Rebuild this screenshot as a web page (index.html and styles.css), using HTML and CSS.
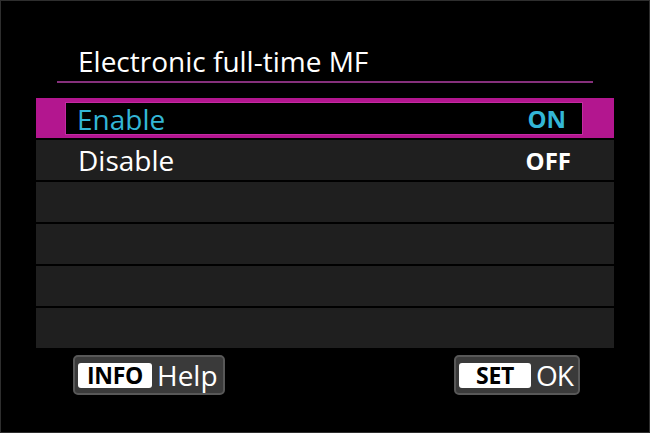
FILE: index.html
```html
<!DOCTYPE html>
<html lang="en">
<head>
<meta charset="utf-8">
<title>Electronic full-time MF</title>
<link rel="stylesheet" href="styles.css">
</head>
<body>
<div class="screen">
  <div class="header"><h1 class="title">Electronic full-time MF</h1></div>
  <div class="list">
    <div class="row selected">
      <div class="sel"><span class="label">Enable</span><span class="value">ON</span></div>
    </div>
    <div class="row"><span class="label">Disable</span><span class="value">OFF</span></div>
    <div class="row"></div>
    <div class="row"></div>
    <div class="row"></div>
    <div class="row"></div>
  </div>
  <div class="footer">
    <div class="btn info"><span class="key">INFO</span><span class="act">Help</span></div>
    <div class="btn set"><span class="key">SET</span><span class="act">OK</span></div>
  </div>
</div>
</body>
</html>
```
FILE: styles.css
```css
html, body {
  margin: 0;
  padding: 0;
  background: #000;
}
body {
  width: 650px;
  height: 433px;
  overflow: hidden;
  font-family: "Open Sans", "DejaVu Sans", sans-serif;
  color: #fff;
}
.screen {
  box-sizing: border-box;
  width: 650px;
  height: 433px;
  border: 1px solid #2e2e2e;
  padding-top: 41px;
}
.header {
  margin-left: 56px;
  width: 536px;
  border-bottom: 2px solid #86307c;
  padding-left: 21px;
  box-sizing: border-box;
  height: 41px;
}
.title {
  margin: 0;
  font-weight: 400;
  font-size: 28px;
  line-height: 38px;
}
.list {
  margin-top: 15px;
  margin-left: 35px;
  width: 578px;
  display: flex;
  flex-direction: column;
  gap: 2px;
}
.row {
  height: 40px;
  box-sizing: border-box;
  background: #1f1f1f;
  display: flex;
  align-items: center;
  justify-content: space-between;
  padding: 0 43px 0 42px;
  font-size: 28px;
}
.row.selected {
  background: #b3168f;
  padding: 4px 31px 3px 29px;
  align-items: stretch;
}
.sel {
  flex: 1;
  background: #000;
  border: 1px solid #c42aa2;
  display: flex;
  align-items: center;
  justify-content: space-between;
  padding: 0 16px 0 11px;
  color: #33b6d6;
}
.value {
  font-weight: 700;
  font-size: 24px;
}
.footer {
  display: flex;
  justify-content: space-between;
  margin-top: 7px;
  padding: 0 69px 0 72px;
}
.btn {
  display: flex;
  align-items: center;
  height: 40px;
  box-sizing: border-box;
  border: 2px solid #585858;
  border-radius: 5px;
  background: #3a3a3a;
  padding: 0 5px 0 3px;
}
.key {
  background: #fff;
  color: #000;
  border-radius: 3px;
  font-weight: 700;
  font-size: 23px;
  letter-spacing: -0.3px;
  height: 25px;
  line-height: 25px;
  box-sizing: border-box;
  text-align: center;
}
.info .key { width: 74px; }
.set .key { width: 72px; }
.act {
  font-size: 28px;
  line-height: 30px;
  margin-left: 5px;
}
.set .act {
  letter-spacing: -1px;
}
```
